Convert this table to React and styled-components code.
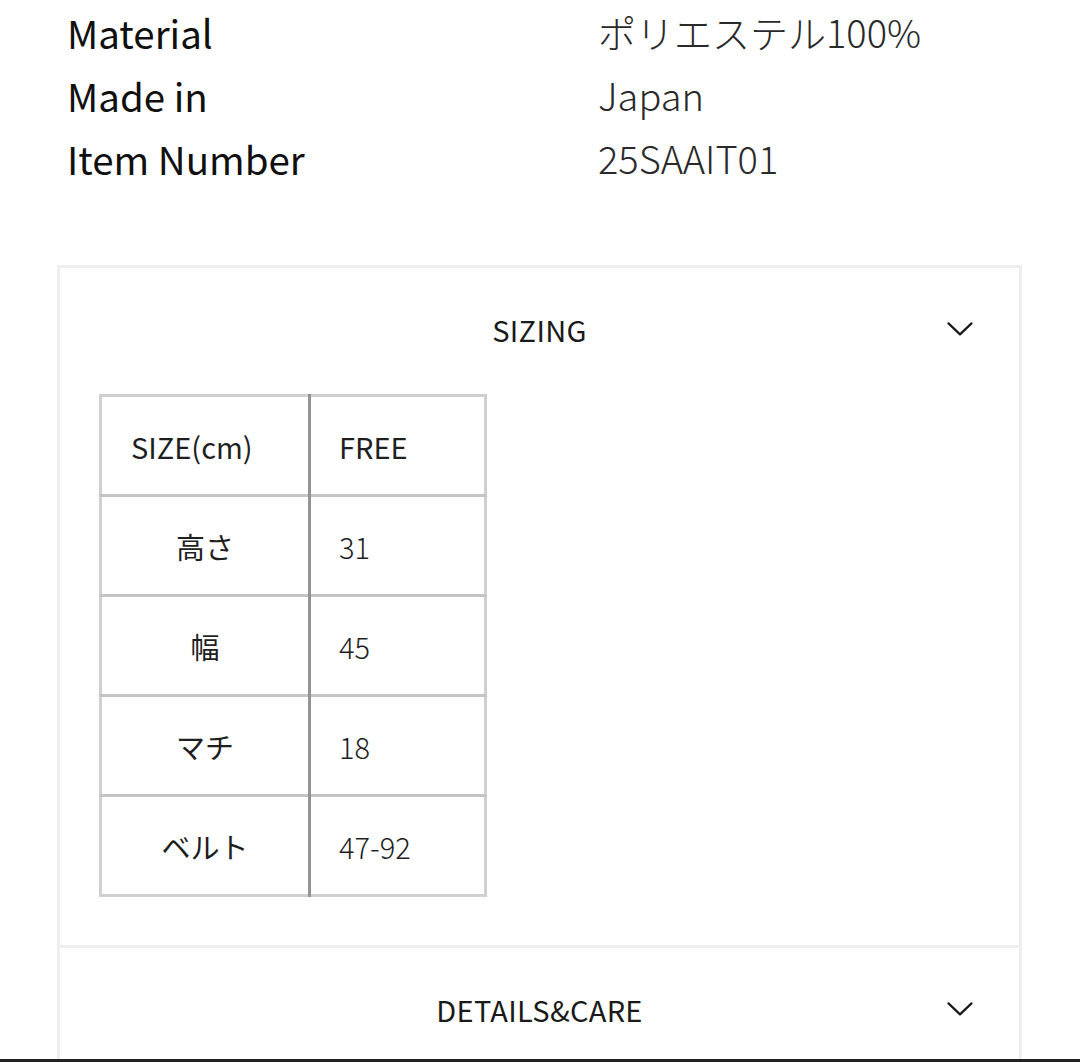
import React from 'react';
import { styled, createGlobalStyle } from 'styled-components';

const GlobalStyle = createGlobalStyle`
  html, body {
    margin: 0;
    padding: 0;
    background: #fff;
  }
  body {
    font-family: "Noto Sans CJK JP", "Noto Sans", sans-serif;
    color: #1a1a1a;
    overflow: hidden;
  }
`;

const Page = styled.div`
  width: 1080px;
  height: 1062px;
  overflow: hidden;
`;

const Specs = styled.dl`
  display: grid;
  grid-template-columns: 531px 1fr;
  grid-auto-rows: 63px;
  margin: 0;
  padding: 0 0 0 67px;
`;

const Label = styled.dt`
  display: flex;
  align-items: center;
  font-size: 38.5px;
  font-weight: 400;
  color: #101010;
`;

const Value = styled.dd`
  display: flex;
  align-items: center;
  margin: 0;
  font-size: 38px;
  font-weight: 300;
  color: #2a2a2a;
`;

const Card = styled.section`
  margin: 76px 0 0 57px;
  width: 959px;
  border: 3px solid #efefef;
  border-bottom: none;
`;

const Section = styled.div`
  & + & {
    border-top: 3px solid #efefef;
  }
`;

const Header = styled.div`
  position: relative;
  height: 126px;
  box-sizing: border-box;
  padding-bottom: 5px;
  display: flex;
  align-items: center;
  justify-content: center;
`;

const Title = styled.h3`
  margin: 0;
  font-size: 29px;
  font-weight: 400;
  letter-spacing: 0.3px;
  color: #1a1a1a;
`;

const Chevron = styled.svg`
  position: absolute;
  right: 46px;
  top: 50%;
  transform: translateY(-65%);
`;

const Body = styled.div`
  padding: 0 0 48px 39px;
`;

const Table = styled.table`
  border-collapse: collapse;
  border: 3px solid #d0d0d0;
  font-size: 29px;
`;

const Row = styled.tr`
  height: 100px;
  & + & {
    border-top: 3px solid #c4c4c4;
  }
`;

const Cell = styled.td`
  padding: 0 ${p => (p.$first ? 29 : 28)}px;
  font-weight: ${p => (p.$head ? 400 : 300)};
  color: #1f1f1f;
  text-align: ${p => (p.$center ? 'center' : 'left')};
  width: ${p => (p.$first ? '148px' : '117px')};
  & + & {
    border-left: 3px solid #939393;
  }
`;

const KeyText = styled.span`
  font-weight: 400;
`;

const BottomBar = styled.div`
  position: fixed;
  left: 0;
  right: 0;
  bottom: 0;
  height: 3px;
  background: #222;
`;

const specs = [
  ['Material', 'ポリエステル100%'],
  ['Made in', 'Japan'],
  ['Item Number', '25SAAIT01'],
];

const sizes = [
  ['高さ', '31'],
  ['幅', '45'],
  ['マチ', '18'],
  ['ベルト', '47-92'],
];

const ChevronIcon = () => (
  <Chevron width="26" height="14" viewBox="0 0 26 14" fill="none">
    <path d="M1.5 1.5 L13 12.5 L24.5 1.5" stroke="#1a1a1a" strokeWidth="2.2" strokeLinecap="round" strokeLinejoin="round" />
  </Chevron>
);

export default function App() {
  return (
    <Page>
      <GlobalStyle />
      <Specs>
        {specs.map(([k, v]) => (
          <React.Fragment key={k}>
            <Label>{k}</Label>
            <Value>{v}</Value>
          </React.Fragment>
        ))}
      </Specs>
      <Card>
        <Section>
          <Header>
            <Title>SIZING</Title>
            <ChevronIcon />
          </Header>
          <Body>
            <Table>
              <tbody>
                <Row>
                  <Cell $head $first>SIZE(cm)</Cell>
                  <Cell $head>FREE</Cell>
                </Row>
                {sizes.map(([k, v]) => (
                  <Row key={k}>
                    <Cell $first $center><KeyText>{k}</KeyText></Cell>
                    <Cell>{v}</Cell>
                  </Row>
                ))}
              </tbody>
            </Table>
          </Body>
        </Section>
        <Section>
          <Header>
            <Title>DETAILS&amp;CARE</Title>
            <ChevronIcon />
          </Header>
        </Section>
      </Card>
      <BottomBar />
    </Page>
  );
}
